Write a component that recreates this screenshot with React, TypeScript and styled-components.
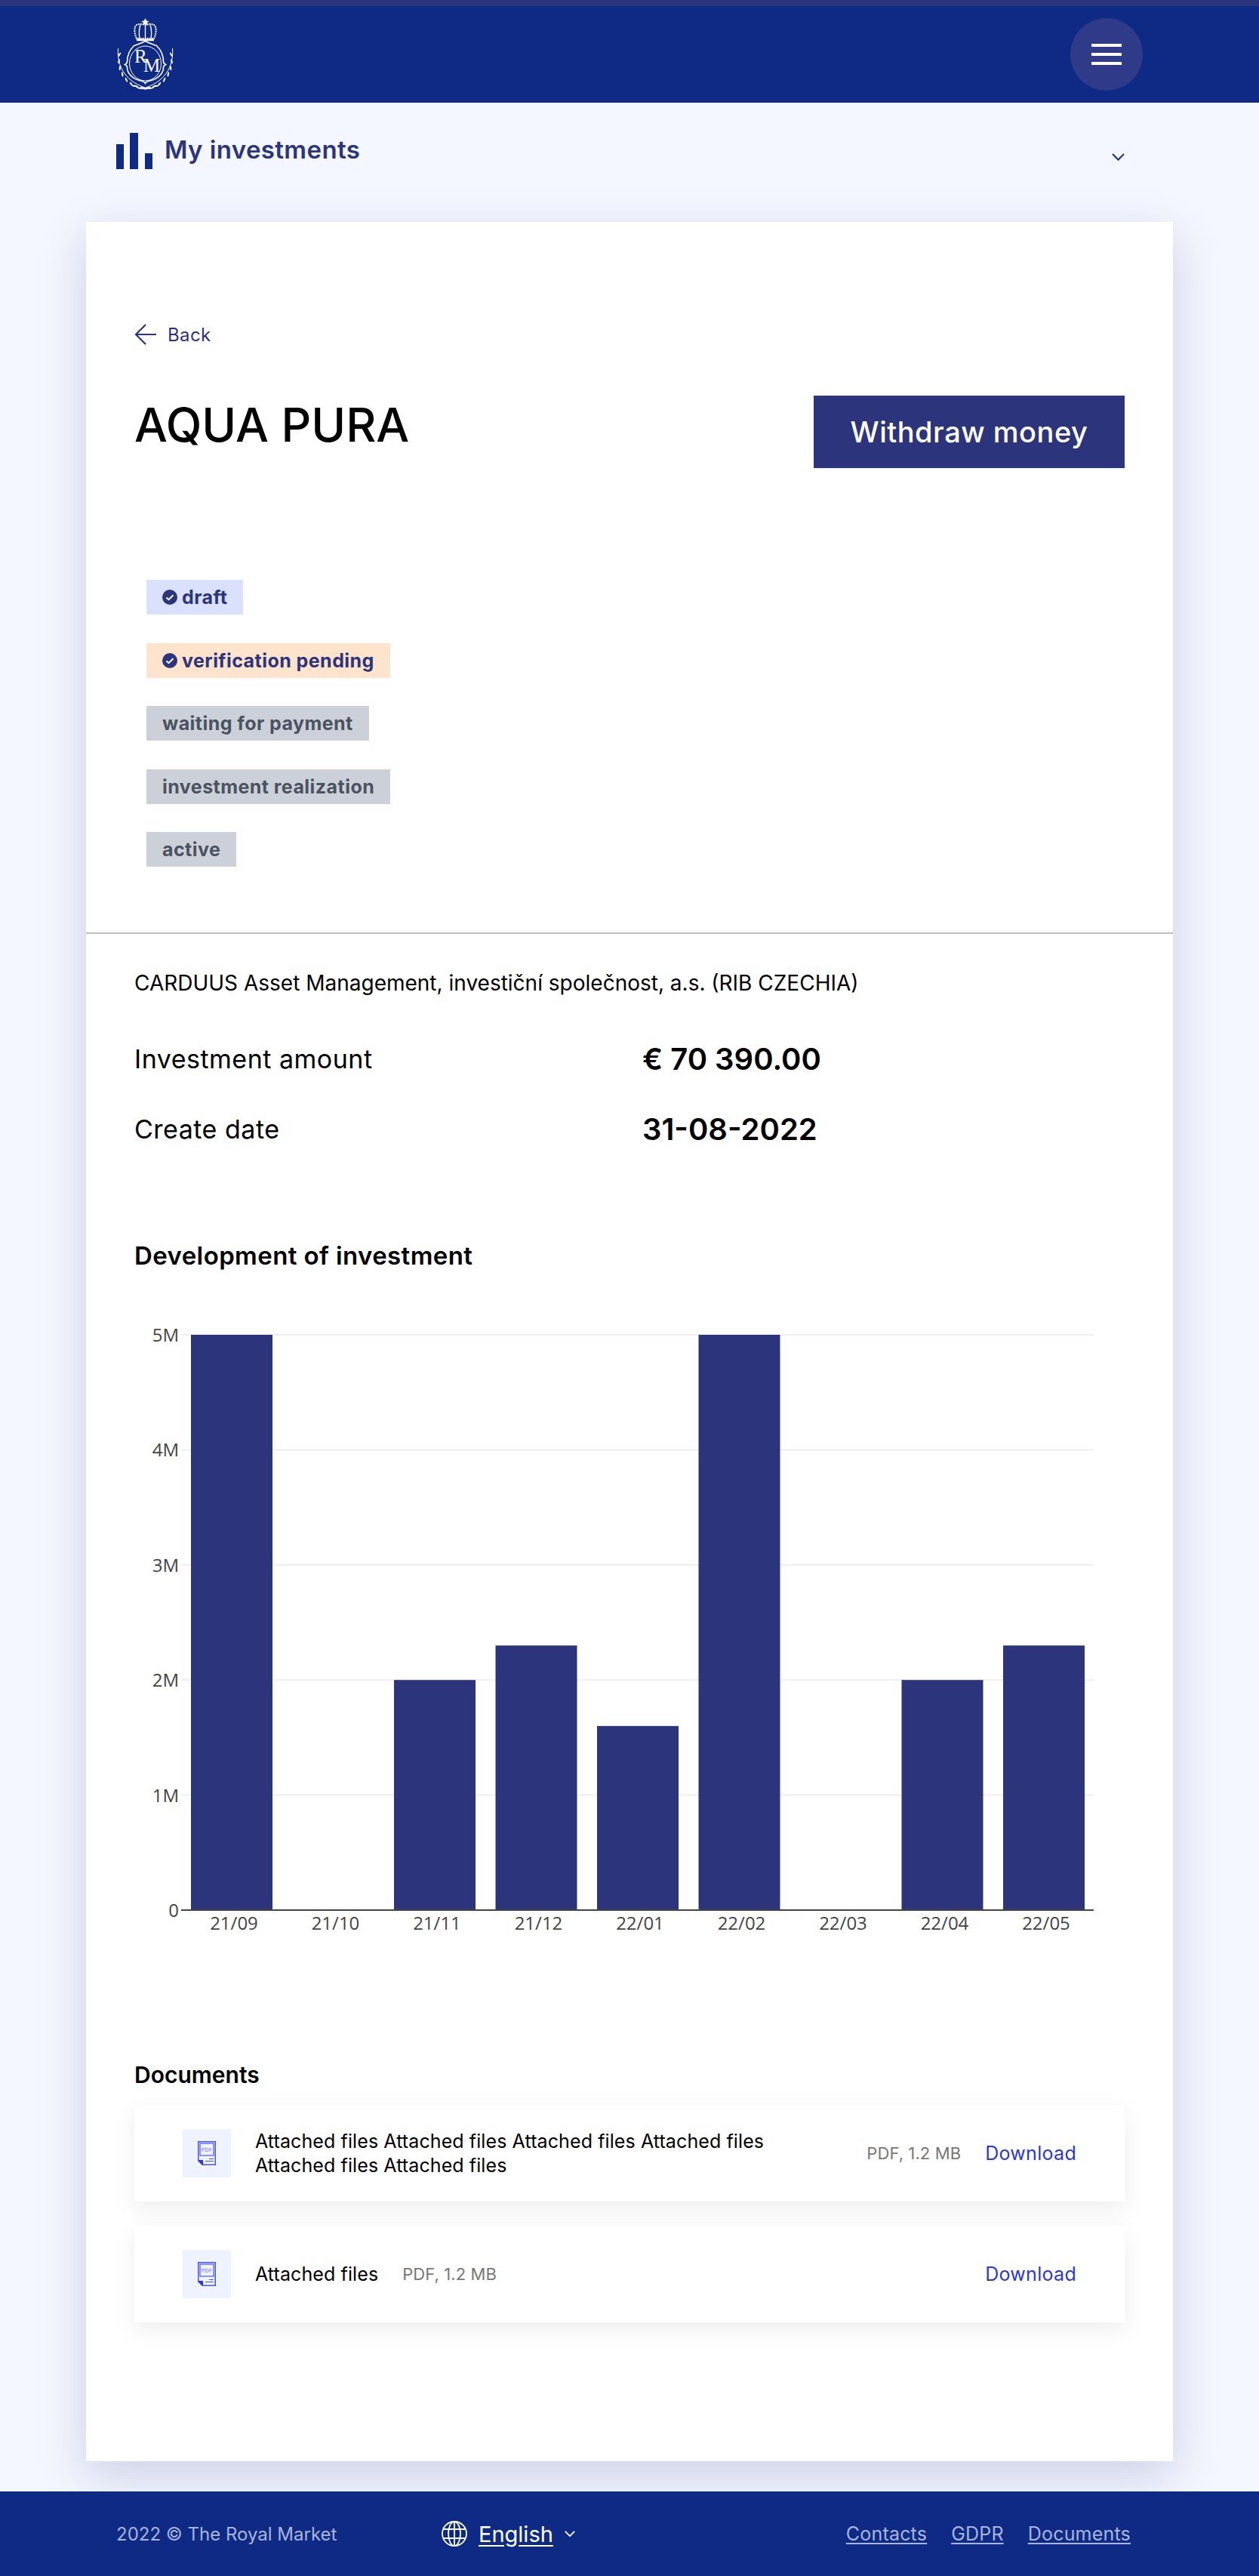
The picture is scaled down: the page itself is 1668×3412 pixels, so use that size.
import React from "react";
import styled, { createGlobalStyle } from "styled-components";

const GlobalStyle = createGlobalStyle`
  html, body {
    margin: 0;
    padding: 0;
    background: #f4f7ff;
    font-family: "Inter", "Noto Sans", sans-serif;
    color: #000;
  }
  * {
    box-sizing: border-box;
  }
`;

const Page = styled.div`
  width: 1668px;
  min-height: 3412px;
  overflow: hidden;
`;

const Header = styled.header`
  display: flex;
  align-items: center;
  justify-content: space-between;
  height: 136px;
  padding: 0 154px;
  background: #0e2a84;
  border-top: 8px solid #2c347c;
`;

const MenuButton = styled.button`
  display: flex;
  flex-direction: column;
  align-items: center;
  justify-content: center;
  gap: 8px;
  width: 96px;
  height: 96px;
  padding: 0;
  border: none;
  border-radius: 50%;
  background: #2f3b88;

  span {
    display: block;
    width: 40px;
    height: 4px;
    background: #fff;
  }
`;

const SubNav = styled.nav`
  display: flex;
  align-items: flex-start;
  justify-content: space-between;
  height: 158px;
  padding: 40px 178px 0 154px;
`;

const SubNavTitle = styled.div`
  display: flex;
  align-items: flex-start;
  gap: 16px;
  font-size: 33px;
  line-height: 44px;
  letter-spacing: 0.4px;
  font-weight: 600;
  color: #2c347c;
`;

const SubNavChevron = styled.div`
  margin-top: 27px;
  color: #2c347c;
  line-height: 0;
`;

const Card = styled.main`
  margin: 0 114px;
  padding: 134px 0 184px;
  background: #fff;
  box-shadow: 0 20px 60px rgba(44, 52, 124, 0.2);
`;

const Inner = styled.div`
  padding: 0 64px;
`;

const BackLink = styled.a`
  display: flex;
  align-items: center;
  gap: 15px;
  height: 30px;
  font-size: 24px;
  letter-spacing: 0.4px;
  color: #2c347c;
`;

const TitleRow = styled.div`
  display: flex;
  align-items: flex-start;
  justify-content: space-between;
  margin-top: 66px;
`;

const Title = styled.h1`
  margin: 0;
  font-size: 62px;
  line-height: 78px;
  font-weight: 500;
`;

const WithdrawButton = styled.button`
  width: 412px;
  height: 96px;
  border: none;
  background: #2c347c;
  color: #fff;
  font-family: inherit;
  font-size: 38px;
  letter-spacing: 0.5px;
  font-weight: 500;
`;

const Badges = styled.div`
  display: flex;
  flex-direction: column;
  align-items: flex-start;
  gap: 37.5px;
  margin: 148px 0 87px 16px;
`;

const Badge = styled.div<{ $tone: "blue" | "orange" | "grey" }>`
  display: flex;
  align-items: center;
  gap: 6px;
  height: 46px;
  padding: 0 21px;
  font-size: 25px;
  letter-spacing: 0.45px;
  font-weight: 700;
  background: ${(p) =>
    p.$tone === "blue" ? "#dae1fc" : p.$tone === "orange" ? "#fee3cd" : "#ccd1d9"};
  color: ${(p) => (p.$tone === "grey" ? "#4b5260" : "#2c347c")};
`;

const Divider = styled.hr`
  margin: 0;
  border: none;
  height: 2px;
  background: #bfbfbf;
`;

const Company = styled.p`
  margin: 45px 0 50px;
  font-size: 28px;
  line-height: 40px;
`;

const InfoRow = styled.div<{ $gap?: number }>`
  display: grid;
  grid-template-columns: 673px 1fr;
  align-items: center;
  height: 60px;
  margin-top: ${(p) => p.$gap ?? 0}px;
  font-size: 34px;
  letter-spacing: 0.5px;
`;

const InfoValue = styled.strong`
  font-size: 40px;
  letter-spacing: 0;
  font-weight: 600;
`;

const SectionTitle = styled.h2`
  margin: 114px 0 53px;
  font-size: 33px;
  letter-spacing: 0.4px;
  line-height: 48px;
  font-weight: 600;
`;

const ChartSvg = styled.svg`
  display: block;
  width: 1312px;
  height: 830px;
  font-family: "Open Sans", sans-serif;
  font-size: 24px;
  fill: #444;
`;

const DocumentsTitle = styled.h3`
  margin: 158px 0 20px;
  font-size: 30px;
  line-height: 40px;
  font-weight: 600;
`;

const DocumentList = styled.div`
  display: flex;
  flex-direction: column;
  gap: 32px;
`;

const DocumentRow = styled.div`
  display: flex;
  align-items: center;
  gap: 32px;
  height: 128px;
  padding: 0 64px;
  background: #fff;
  box-shadow: 0 10px 30px rgba(0, 0, 0, 0.07);
  font-size: 25px;
  letter-spacing: 0.1px;
  line-height: 32px;
`;

const DocumentIcon = styled.div`
  display: flex;
  align-items: center;
  justify-content: center;
  flex: none;
  width: 64px;
  height: 64px;
  background: #eff2ff;
`;

const DocumentName = styled.div``;

const DocumentMeta = styled.span`
  flex: none;
  font-size: 22px;
  color: #777;
`;

const DownloadLink = styled.a`
  flex: none;
  margin-left: auto;
  letter-spacing: 0.3px;
  color: #2a37d9;
`;

const Footer = styled.footer`
  display: flex;
  align-items: center;
  height: 112px;
  margin-top: 40px;
  padding: 0 170px 0 154px;
  background: #0e2a84;
  color: #a9b4dd;
  font-size: 24px;
`;

const Copyright = styled.span`
  width: 431px;
`;

const Language = styled.div`
  display: flex;
  align-items: center;
  gap: 15px;
  color: #fff;
  font-size: 29px;

  u {
    text-underline-offset: 4px;
  }
`;

const FooterLinks = styled.div`
  display: flex;
  gap: 32px;
  margin-left: auto;
  font-size: 25px;
  letter-spacing: 0.2px;

  a {
    color: inherit;
    text-decoration: underline;
    text-underline-offset: 3px;
  }
`;

const Chevron: React.FC<{ width: number }> = ({ width }) => (
  <svg width={width} height={width * 0.6} viewBox="0 0 17 10" fill="none" stroke="currentColor" strokeWidth="2.2">
    <path d="M1 1l7.5 7.5L16 1" />
  </svg>
);

const BarsIcon = () => (
  <svg width="48" height="48" viewBox="0 0 48 48" fill="#0e2a84">
    <rect x="0" y="15" width="10" height="33" />
    <rect x="18" y="0" width="11" height="48" />
    <rect x="38" y="27" width="10" height="21" />
  </svg>
);

const ArrowLeft = () => (
  <svg width="29" height="28" viewBox="0 0 29 28" fill="none" stroke="currentColor" strokeWidth="2.2">
    <path d="M29 14H2M15 1L2 14l13 13" />
  </svg>
);

const CheckIcon = () => (
  <svg width="20" height="20" viewBox="0 0 20 20">
    <circle cx="10" cy="10" r="10" fill="#2c347c" />
    <path d="M5.5 10.4l3 2.8 6-6" fill="none" stroke="#fff" strokeWidth="2" />
  </svg>
);

const GlobeIcon = () => (
  <svg width="34" height="34" viewBox="0 0 34 34" fill="none" stroke="#fff" strokeWidth="1.8">
    <circle cx="17" cy="17" r="16" />
    <ellipse cx="17" cy="17" rx="8" ry="16" />
    <path d="M17 1v32M2.5 11h29M2.5 23h29" />
  </svg>
);

const PdfIcon = () => (
  <svg width="24" height="32" viewBox="0 0 24 32" fill="none" stroke="#4a56e2">
    <path d="M.75.75h22.5v30.5H6L.75 26z" strokeWidth="1.5" />
    <path d="M0 25h7v7z" fill="#2a37d9" stroke="none" />
    <rect x="3" y="3" width="18" height="16" strokeWidth="1.2" />
    <text x="12" y="14" textAnchor="middle" fontSize="7" fontFamily="Liberation Sans, sans-serif" fill="#6a74e6" stroke="none">
      PDF
    </text>
    <path d="M15 23.5h6M10 26.5h11" strokeWidth="1.2" />
  </svg>
);

// laurel leaves along the lower half of the crest, mirrored for each side
const leafAngles = [8, 22, 36, 50, 64, 78, 92, 106, 120, 134];

const LogoMark = () => (
  <svg width="78" height="96" viewBox="0 0 78 96" fill="none" stroke="#fff">
    <path d="M38.5 0l1.6 3.6 3.6.3-2.8 2.3.9 3.4-3.3-1.9-3.3 1.9.9-3.4-2.8-2.3 3.6-.3z" fill="#fff" stroke="none" />
    <path d="M27 27c-3-6-4-15 0-18 4-2 8-1 11.500 0 3.500-1 7.500-2 11.500 0 4 3 3 12 0 18z" strokeWidth="2" strokeDasharray="2 1" />
    <path d="M38.500 9v18M32 9c-2 6-2 12-1 18M45 9c2 6 2 12 1 18" strokeWidth="1.400" />
    <path d="M27 29h23" strokeWidth="2.400" />
    <path d="M38.500 30.500c8 4 13 5 15 6 5 5 9 13 9 21 0 2 1 3 3 4-2 1-3 2-3 4 0 9-9 16-20 18-2 .5-3 1-4 3-1-2-2-2.500-4-3-11-2-20-9-20-18 0-2-1-3-3-4 2-1 3-2 3-4 0-8 4-16 9-21 2-1 7-2 15-6z" strokeWidth="1.600" />
    <ellipse cx="38.500" cy="60" rx="21" ry="23" strokeWidth="1" />
    <text x="24" y="59" fontSize="25" fontFamily="Liberation Serif, serif" fill="#fff" stroke="none">
      R
    </text>
    <text x="36" y="71" fontSize="25" fontFamily="Liberation Serif, serif" fill="#fff" stroke="none">
      M
    </text>
    {[1, -1].map((side) => (
      <g key={side} transform={`translate(38.500 56) scale(${side} 1)`}>
        <path d="M36 -16C38 8 26 30 -6 38" strokeWidth="1" />
        {leafAngles.map((a) => {
          const rad = (a * Math.PI) / 180;
          const x = 35 * Math.cos(rad - 0.35);
          const y = 37 * Math.sin(rad - 0.35);
          return (
            <ellipse
              key={a}
              cx={x}
              cy={y}
              rx="3.200"
              ry="1.100"
              fill="#fff"
              stroke="none"
              transform={`rotate(${a + 50} ${x} ${y})`}
            />
          );
        })}
      </g>
    ))}
  </svg>
);

const chartData = [
  { label: "21/09", value: 5 },
  { label: "21/10", value: 0 },
  { label: "21/11", value: 2 },
  { label: "21/12", value: 2.3 },
  { label: "22/01", value: 1.6 },
  { label: "22/02", value: 5 },
  { label: "22/03", value: 0 },
  { label: "22/04", value: 2 },
  { label: "22/05", value: 2.3 },
];

const yTicks = ["0", "1M", "2M", "3M", "4M", "5M"];
const chartTop = 28;
const chartBase = 790;
const unit = (chartBase - chartTop) / 5;

const Chart = () => (
  <ChartSvg viewBox="0 0 1312 830">
    {yTicks.map((tick, i) => {
      const y = chartBase - i * unit;
      return (
        <g key={tick}>
          {i > 0 && <line x1="62" x2="1271" y1={y} y2={y} stroke="#eeeeee" strokeWidth="2" />}
          <text x="59" y={y + 9} textAnchor="end">
            {tick}
          </text>
        </g>
      );
    })}
    {chartData.map((d, i) => {
      const x = 75 + i * 134.5;
      return (
        <g key={d.label}>
          <rect x={x} y={chartBase - d.value * unit} width="108" height={d.value * unit} fill="#2c347c" />
          <text x={x + 57} y={chartBase + 26} textAnchor="middle">
            {d.label}
          </text>
        </g>
      );
    })}
    <line x1="62" x2="1271" y1={chartBase} y2={chartBase} stroke="#444" strokeWidth="2" />
  </ChartSvg>
);

const App: React.FC = () => (
  <Page>
    <GlobalStyle />
    <Header>
      <LogoMark />
      <MenuButton aria-label="Menu">
        <span />
        <span />
        <span />
      </MenuButton>
    </Header>

    <SubNav>
      <SubNavTitle>
        <BarsIcon />
        My investments
      </SubNavTitle>
      <SubNavChevron>
        <Chevron width={17} />
      </SubNavChevron>
    </SubNav>

    <Card>
      <Inner>
        <BackLink>
          <ArrowLeft />
          Back
        </BackLink>
        <TitleRow>
          <Title>AQUA PURA</Title>
          <WithdrawButton>Withdraw money</WithdrawButton>
        </TitleRow>
        <Badges>
          <Badge $tone="blue">
            <CheckIcon />
            draft
          </Badge>
          <Badge $tone="orange">
            <CheckIcon />
            verification pending
          </Badge>
          <Badge $tone="grey">waiting for payment</Badge>
          <Badge $tone="grey">investment realization</Badge>
          <Badge $tone="grey">active</Badge>
        </Badges>
      </Inner>

      <Divider />

      <Inner>
        <Company>CARDUUS Asset Management, investiční společnost, a.s. (RIB CZECHIA)</Company>
        <InfoRow>
          <span>Investment amount</span>
          <InfoValue>€ 70 390.00</InfoValue>
        </InfoRow>
        <InfoRow $gap={33}>
          <span>Create date</span>
          <InfoValue>31-08-2022</InfoValue>
        </InfoRow>

        <SectionTitle>Development of investment</SectionTitle>
        <Chart />

        <DocumentsTitle>Documents</DocumentsTitle>
        <DocumentList>
          <DocumentRow>
            <DocumentIcon>
              <PdfIcon />
            </DocumentIcon>
            <DocumentName>
              Attached files Attached files Attached files Attached files Attached files Attached files
            </DocumentName>
            <DocumentMeta>PDF, 1.2 MB</DocumentMeta>
            <DownloadLink>Download</DownloadLink>
          </DocumentRow>
          <DocumentRow>
            <DocumentIcon>
              <PdfIcon />
            </DocumentIcon>
            <DocumentName>Attached files</DocumentName>
            <DocumentMeta>PDF, 1.2 MB</DocumentMeta>
            <DownloadLink>Download</DownloadLink>
          </DocumentRow>
        </DocumentList>
      </Inner>
    </Card>

    <Footer>
      <Copyright>2022 © The Royal Market</Copyright>
      <Language>
        <GlobeIcon />
        <u>English</u>
        <Chevron width={14} />
      </Language>
      <FooterLinks>
        <a>Contacts</a>
        <a>GDPR</a>
        <a>Documents</a>
      </FooterLinks>
    </Footer>
  </Page>
);

export default App;
